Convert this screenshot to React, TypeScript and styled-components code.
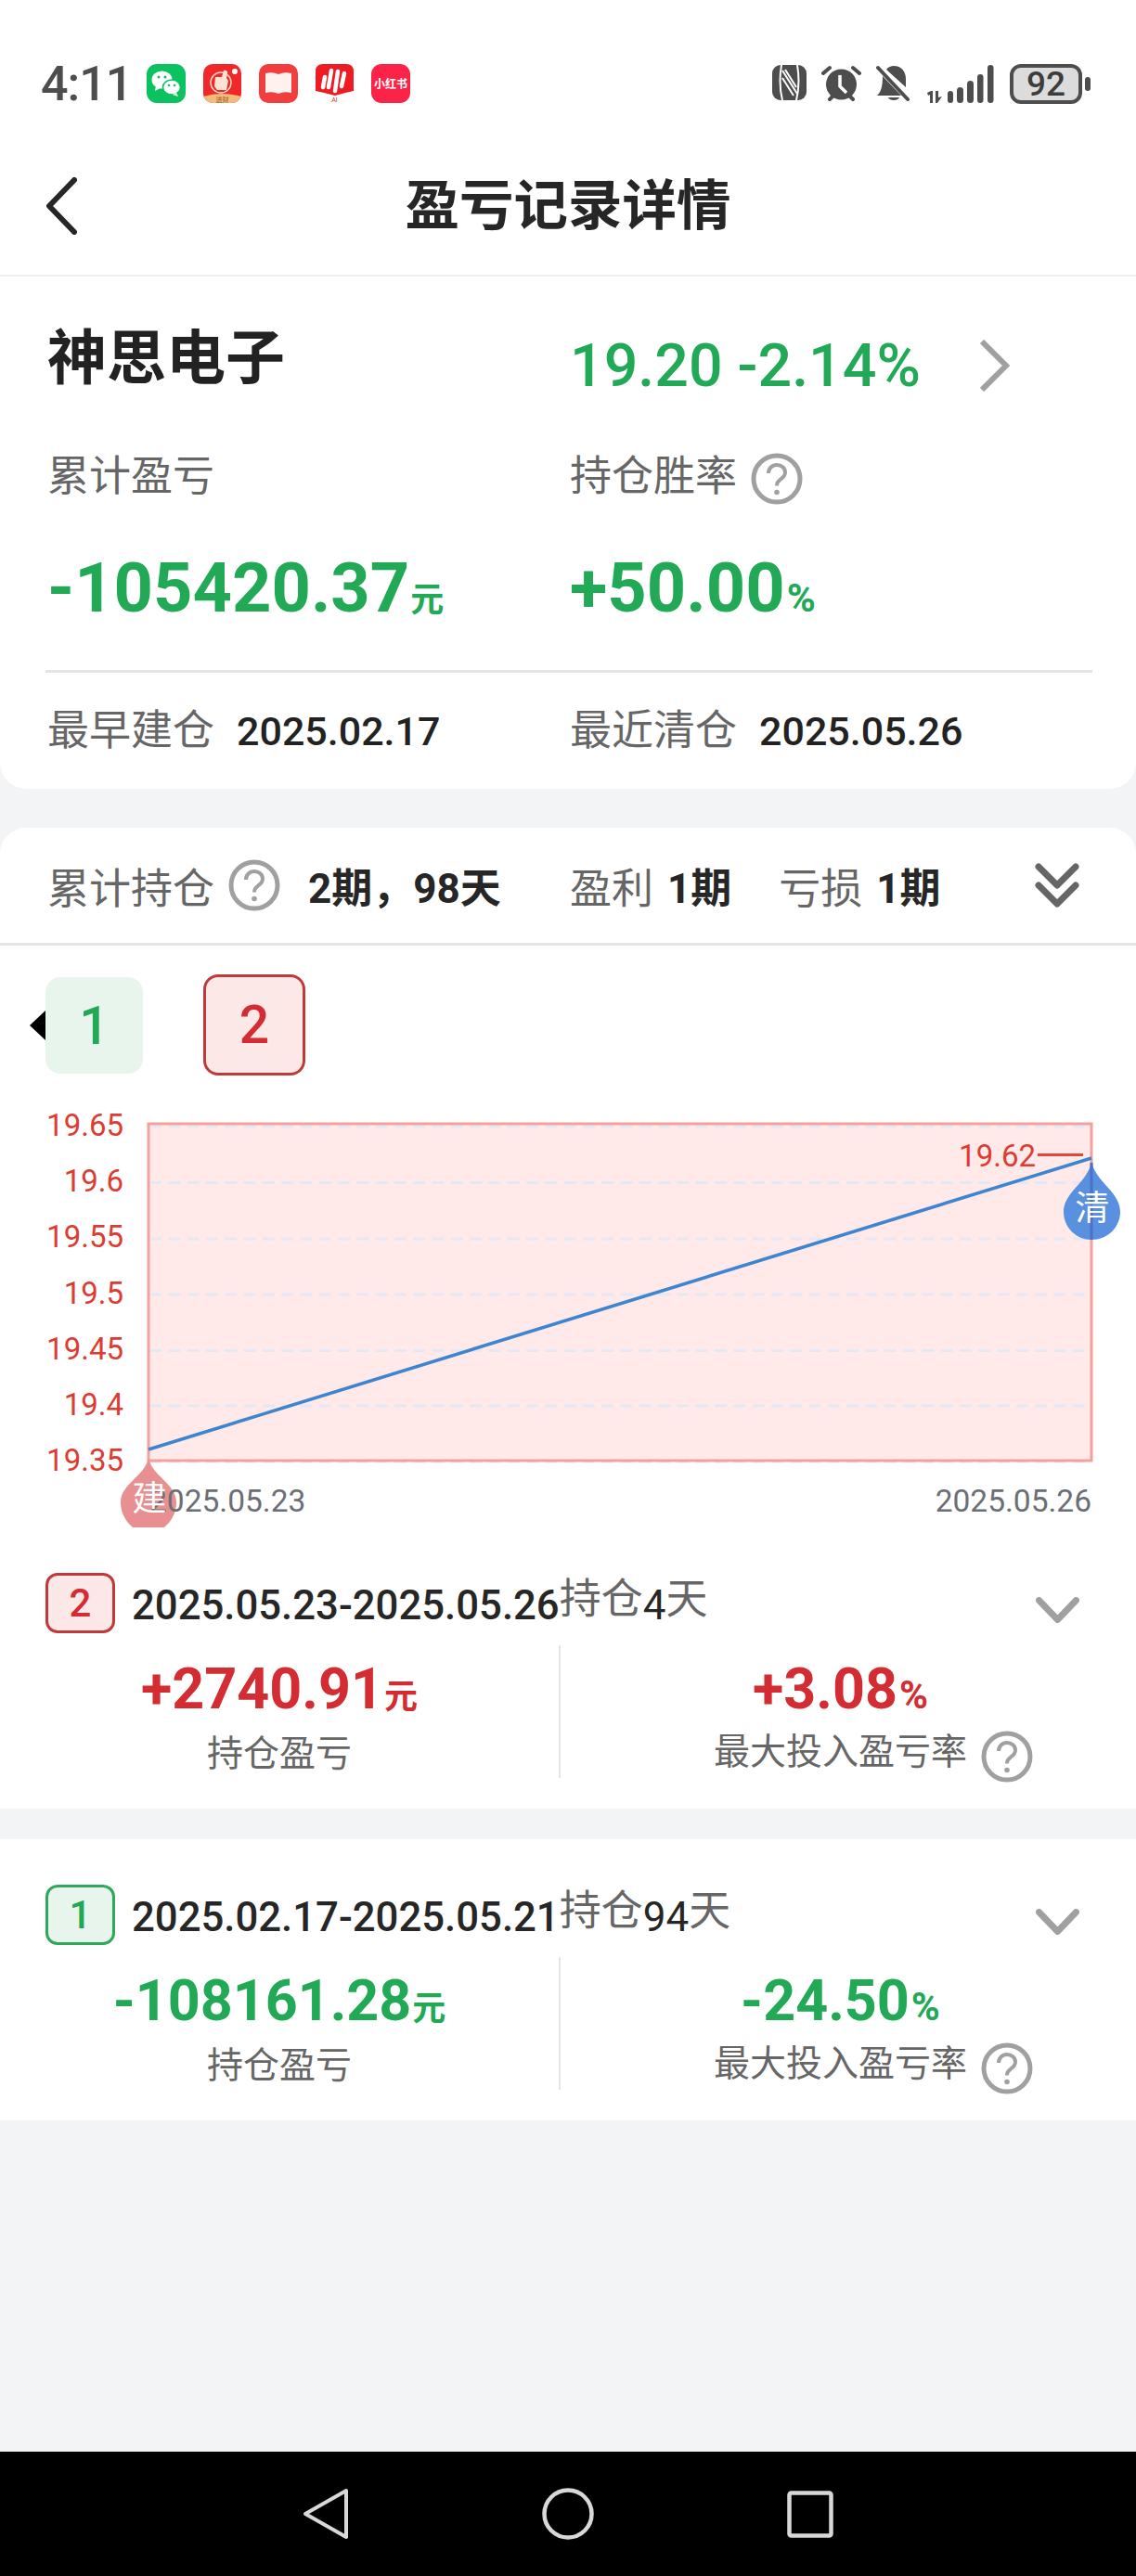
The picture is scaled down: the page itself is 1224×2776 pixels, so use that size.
import React from 'react'
import styled, { createGlobalStyle } from 'styled-components'

const GREEN = '#21a956'
const RED = '#d32c33'

const GlobalStyle = createGlobalStyle`
  html, body {
    margin: 0;
    padding: 0;
    background: #f3f4f6;
    font-family: Roboto, "Noto Sans CJK SC", sans-serif;
  }
`

const Page = styled.div`
  width: 1224px;
  height: 2776px;
  display: flex;
  flex-direction: column;
  overflow: hidden;
  background: #f3f4f6;
`

const StatusBar = styled.div`
  height: 140px;
  box-sizing: border-box;
  padding: 69px 58px 0 44px;
  display: flex;
  align-items: flex-start;
  background: #fff;
`

const Clock = styled.div`
  width: 114px;
  height: 44px;
  line-height: 44px;
  font-size: 52px;
  font-weight: 500;
  letter-spacing: -1px;
  color: #4d4d4d;
`

const AppIcons = styled.div`
  display: flex;
  gap: 19px;
`

const SystemIcons = styled.div`
  margin-left: auto;
  display: flex;
  align-items: flex-start;
  padding-top: 1px;
`

const Battery = styled.div`
  position: relative;
  width: 78px;
  height: 43px;
  margin-left: 16px;
  margin-top: -1px;
  box-sizing: border-box;
  border: 4px solid #4d4d4d;
  border-radius: 12px;
  background: #dcdcdc;
  text-align: center;
  line-height: 36px;
  font-size: 37px;
  font-weight: 500;
  color: #3d3d3d;

  &::after {
    content: '';
    position: absolute;
    right: -13px;
    top: 10px;
    width: 6px;
    height: 15px;
    border-radius: 3px;
    background: #4d4d4d;
  }
`

const Nav = styled.div`
  height: 158px;
  box-sizing: border-box;
  padding-top: 8px;
  padding-left: 50px;
  display: grid;
  grid-template-columns: 1fr auto 1fr;
  align-items: center;
  background: #fff;
  border-bottom: 2px solid #eceef0;
`

const Title = styled.div`
  margin-left: -50px;
  font-size: 58.500px;
  font-weight: 700;
  color: #262626;
  line-height: 70px;
`

const SummaryCard = styled.section`
  height: 552px;
  box-sizing: border-box;
  padding: 53px 47px 0 51px;
  background: #fff;
  border-radius: 0 0 28px 28px;
`

const TwoCols = styled.div`
  display: grid;
  grid-template-columns: 563px 1fr;
`

const StockName = styled.div`
  font-size: 64px;
  font-weight: 700;
  line-height: 72px;
  color: #222;
`

const PriceRow = styled.div`
  display: flex;
  align-items: center;
  height: 72px;
  margin-top: 7px;
  font-size: 64.500px;
  font-weight: 500;
  color: ${GREEN};
  gap: 64px;
`

const GrayLabel = styled.div`
  display: flex;
  align-items: center;
  gap: 15px;
  font-size: 45px;
  line-height: 60px;
  color: #666;

  svg {
    margin-top: 4px;
  }
`

const LabelRow = styled(TwoCols)`
  margin-top: 54px;
`

const BigValueRow = styled(TwoCols)`
  margin-top: 45px;
`

const BigValue = styled.div`
  font-size: 74px;
  font-weight: 700;
  line-height: 90px;
  color: ${GREEN};
  white-space: nowrap;
`

const Unit = styled.span<{ $percent?: boolean }>`
  margin-left: ${(p) => (p.$percent ? 2 : 1)}px;
  font-size: ${(p) => (p.$percent ? 42 : 36)}px;
  font-weight: 700;
`

const Divider = styled.div`
  height: 3px;
  margin-top: 30px;
  margin-left: -2px;
  background: #e5e5e5;
`

const DatesRow = styled(TwoCols)`
  margin-top: 33px;
`

const DateItem = styled.div`
  display: flex;
  align-items: center;
  gap: 24px;
  font-size: 45px;
  line-height: 60px;
  color: #666;
`

const DateValue = styled.span`
  font-size: 43px;
  font-weight: 500;
  color: #222;
`

const PeriodsCard = styled.section`
  margin-top: 42px;
  background: #fff;
  border-radius: 28px 28px 0 0;
`

const TotalsRow = styled.div`
  height: 127px;
  box-sizing: border-box;
  padding: 0 61px 0 51px;
  display: grid;
  grid-template-columns: 563px 1fr auto;
  align-items: center;
  border-bottom: 3px solid #e5e5e5;
`

const TotalsGroup = styled.div`
  display: flex;
  align-items: center;
`

const TotalsLabel = styled.span<{ $gap?: number }>`
  margin-left: ${(p) => p.$gap ?? 0}px;
  font-size: 45px;
  color: #666;
`

const TotalsValue = styled.span<{ $gap: number }>`
  margin-left: ${(p) => p.$gap}px;
  font-size: 44px;
  font-weight: 700;
  color: #262626;
`

const HelpSlot = styled.span`
  display: flex;
  margin-left: 15px;
`

const TabsRow = styled.div`
  height: 160px;
  box-sizing: border-box;
  padding: 31px 0 0 49px;
  display: flex;
  align-items: flex-start;
  gap: 65px;
`

const PeriodTab = styled.div<{ $tone: 'green' | 'red' }>`
  position: relative;
  display: flex;
  align-items: center;
  justify-content: center;
  box-sizing: border-box;
  font-size: 57px;
  font-weight: 500;
  ${(p) =>
    p.$tone === 'green'
      ? `
    width: 105px;
    height: 104px;
    margin-top: 3px;
    border-radius: 16px;
    background: #e8f5ec;
    color: ${GREEN};
    &::before {
      content: '';
      position: absolute;
      left: -17px;
      top: 36px;
      border-style: solid;
      border-width: 16px 17px 16px 0;
      border-color: transparent #000 transparent transparent;
    }`
      : `
    width: 110px;
    height: 109px;
    border-radius: 16px;
    border: 3px solid #bf3a3a;
    background: #fde8e8;
    color: ${RED};`}
`

const ChartSvg = styled.svg`
  display: block;
  width: 1224px;
  height: 480px;
  font-family: Roboto, "Noto Sans CJK SC", sans-serif;
`

const Record = styled.div<{ $top: number; $height: number; $gapTop?: boolean }>`
  height: ${(p) => p.$height}px;
  box-sizing: border-box;
  padding: ${(p) => p.$top}px 17px 0 0;
  background: #fff;
  margin-top: ${(p) => (p.$gapTop ? 33 : 0)}px;
`

const RecordHead = styled.div`
  height: 65px;
  display: flex;
  align-items: center;
  padding: 0 44px 0 49px;
`

const PeriodBadge = styled.div<{ $tone: 'green' | 'red' }>`
  width: 75px;
  height: 65px;
  box-sizing: border-box;
  display: flex;
  align-items: center;
  justify-content: center;
  border-radius: 13px;
  font-size: 42px;
  font-weight: 500;
  border: 3px solid ${(p) => (p.$tone === 'green' ? '#2fa85c' : '#bf3a3a')};
  background: ${(p) => (p.$tone === 'green' ? '#e8f5ec' : '#fde8e8')};
  color: ${(p) => (p.$tone === 'green' ? GREEN : RED)};
`

const RecordRange = styled.div`
  margin-left: 18px;
  margin-top: -2px;
  font-size: 43.700px;
  font-weight: 500;
  color: #262626;
  white-space: nowrap;
  line-height: 60px;
`

const HoldText = styled.span`
  font-size: 44px;
  font-weight: 400;
`

const HoldWord = styled.span`
  font-size: 45px;
  color: #666;
  vertical-align: 6px;
`

const RecordChevron = styled.div`
  margin-left: auto;
  display: flex;
  margin-top: 14px;
`

const Metrics = styled.div`
  margin-top: 13px;
  height: 143px;
  display: grid;
  grid-template-columns: 602px 1fr;
`

const Metric = styled.div<{ $divided?: boolean }>`
  padding-top: 7px;
  display: flex;
  flex-direction: column;
  align-items: center;
  ${(p) => (p.$divided ? 'border-left: 2px solid #e5e5e5;' : '')}
`

const MetricValue = styled.div<{ $tone: 'green' | 'red' }>`
  font-size: 61px;
  font-weight: 700;
  line-height: 80px;
  white-space: nowrap;
  color: ${(p) => (p.$tone === 'green' ? GREEN : RED)};
`

const MetricLabel = styled.div`
  position: relative;
  margin-top: -4px;
  font-size: 39px;
  line-height: 50px;
  color: #666;
  white-space: nowrap;
`

const MetricHelp = styled.span`
  position: absolute;
  left: calc(100% + 15px);
  top: 2px;
  display: flex;
`

const Spacer = styled.div`
  flex: 1;
`

const BottomBar = styled.div`
  height: 134px;
  padding-left: 326px;
  display: flex;
  align-items: center;
  gap: 208px;
  background: #000;
`

function HelpIcon() {
  return (
    <svg width="56" height="56" viewBox="0 0 56 56" fill="none" stroke="#a0a0a0">
      <circle cx="28" cy="28" r="25" strokeWidth="5" />
      <path d="M19 22c0-5.500 4-9 9-9s9 3.500 9 8c0 3.400-2 5.400-4.800 7.400-2.500 1.800-4.200 3.400-4.200 7" strokeWidth="4" />
      <circle cx="28" cy="42.500" r="2.800" fill="#a0a0a0" stroke="none" />
    </svg>
  )
}

function WechatIcon() {
  return (
    <svg width="42" height="42" viewBox="0 0 42 42">
      <rect width="42" height="42" rx="11" fill="#0ac25f" />
      <ellipse cx="16.500" cy="17" rx="11" ry="9.500" fill="#fff" />
      <path d="M10 23l-1 6 6-3z" fill="#fff" />
      <ellipse cx="27" cy="25" rx="9.500" ry="8" fill="#fff" stroke="#0ac25f" strokeWidth="1.500" />
      <path d="M32 31l2 4-6-2z" fill="#fff" />
      <circle cx="13" cy="14" r="1.500" fill="#0ac25f" />
      <circle cx="20" cy="14" r="1.500" fill="#0ac25f" />
      <circle cx="24" cy="23" r="1.300" fill="#0ac25f" />
      <circle cx="30" cy="23" r="1.300" fill="#0ac25f" />
    </svg>
  )
}

function FortuneIcon() {
  return (
    <svg width="41" height="42" viewBox="0 0 41 42">
      <defs>
        <clipPath id="fortune-clip">
          <rect width="41" height="42" rx="10" />
        </clipPath>
      </defs>
      <g clipPath="url(#fortune-clip)">
        <rect width="41" height="42" fill="#f0282a" />
        <path d="M0 42V35q20-6 41 0v7z" fill="#f2bd7c" />
        <circle cx="19" cy="20" r="11" fill="none" stroke="#ffd9c8" strokeWidth="1.500" />
        <path d="M13 14h7l2-7c3-1 5 1 4 4l-1 4 2 3-2 10H15l-3-4z" fill="#fde3d4" />
        <circle cx="34" cy="8" r="3" fill="#fff" />
        <text x="20.500" y="40.500" fontSize="7" textAnchor="middle" fill="#9a5a20">进财</text>
      </g>
    </svg>
  )
}

function BookIcon() {
  return (
    <svg width="42" height="42" viewBox="0 0 42 42">
      <rect width="42" height="42" rx="10" fill="#f23d3f" />
      <path d="M7 10q8-2 14 1 6-3 14-1v21q-8-2-14 1-6-3-14-1z" fill="#fff1ee" />
    </svg>
  )
}

function BrokerIcon() {
  return (
    <svg width="41" height="42" viewBox="0 0 41 42">
      <path d="M0 8q0-8 8-8h25q8 0 8 8v21q-10 2-20 5-11-3-21-5z" fill="#ee1c22" />
      <path d="M8 25l2-11M14 25l3-18M21 29l3-21M28 24l3-14" stroke="#fff" strokeWidth="4.500" strokeLinecap="round" />
      <text x="20.500" y="41" fontSize="7" textAnchor="middle" fill="#c53030">AI</text>
    </svg>
  )
}

function RedNoteIcon() {
  return (
    <svg width="42" height="42" viewBox="0 0 42 42">
      <rect width="42" height="42" rx="11" fill="#fb2347" />
      <text x="21" y="25.500" fontSize="12" fontWeight="700" textAnchor="middle" fill="#fff">小红书</text>
    </svg>
  )
}

function NfcIcon() {
  return (
    <svg width="37" height="38" viewBox="0 0 37 38">
      <rect width="37" height="38" rx="9" fill="#4d4d4d" />
      <path d="M10 0c-2 12-2 26 1 38M27 0c2 12 2 26-1 38" stroke="#fff" strokeWidth="2" fill="none" />
      <path d="M11 6l16 25M11 14l12 19M14 5l12 19" stroke="#fff" strokeWidth="2" fill="none" />
    </svg>
  )
}

function AlarmIcon() {
  return (
    <svg width="43" height="40" viewBox="0 0 43 40" style={{ marginLeft: 16 }}>
      <circle cx="21.500" cy="21" r="16.500" fill="#4d4d4d" />
      <path d="M2 9l7-6M41 9l-7-6M9 37l3-3M34 37l-3-3" stroke="#4d4d4d" strokeWidth="4" strokeLinecap="round" />
      <path d="M20 11v12l7 7" stroke="#fff" strokeWidth="3.500" fill="none" />
    </svg>
  )
}

function BellOffIcon() {
  return (
    <svg width="37" height="40" viewBox="0 0 37 40" style={{ marginLeft: 16 }}>
      <path d="M19 1c8 0 13 6 13 14v9L11 5c2-3 5-4 8-4zM7 12l20 21H1c4-4 6-9 6-21z" fill="#4d4d4d" />
      <path d="M13 35h12c-1 4-11 4-12 0z" fill="#4d4d4d" />
      <path d="M2 3l32 34" stroke="#4d4d4d" strokeWidth="4" strokeLinecap="round" />
    </svg>
  )
}

function SignalIcon() {
  return (
    <svg width="74" height="41" viewBox="0 0 74 41" style={{ marginLeft: 17 }} fill="#4d4d4d">
      <path d="M1 30l4-2h2v13H4V32l-2 1zM10 28h3v7l4-1-5 7h-2z" />
      <rect x="23" y="28" width="6" height="13" rx="3" />
      <rect x="33" y="24" width="7" height="17" rx="3.500" />
      <rect x="44" y="17" width="7" height="24" rx="3.500" />
      <rect x="55" y="10" width="6.500" height="31" rx="3.250" />
      <rect x="66" y="0" width="6.500" height="41" rx="3.250" />
    </svg>
  )
}

function BackIcon() {
  return (
    <svg width="34" height="62" viewBox="0 0 34 62" fill="none" stroke="#262626" strokeWidth="6" strokeLinecap="round" strokeLinejoin="round">
      <path d="M30 3L3 31l27 28" />
    </svg>
  )
}

function ForwardIcon() {
  return (
    <svg width="32" height="56" viewBox="0 0 32 56" fill="none" stroke="#a0a0a0" strokeWidth="6">
      <path d="M2 2l26 26L2 54" />
    </svg>
  )
}

function DoubleChevron() {
  return (
    <svg width="48" height="48" viewBox="0 0 48 48" fill="none" stroke="#666" strokeWidth="7" strokeLinecap="round" strokeLinejoin="round">
      <path d="M4 4l20 20L44 4M4 24l20 20 20-20" />
    </svg>
  )
}

function DownChevron() {
  return (
    <svg width="47" height="28" viewBox="0 0 47 28" fill="none" stroke="#a0a0a0" strokeWidth="7" strokeLinecap="round" strokeLinejoin="round">
      <path d="M3.500 3.500l20 21 20-21" />
    </svg>
  )
}

const gridLines = [1215, 1275.500, 1336, 1396, 1456.500, 1516, 1576]
const priceLabels = ['19.65', '19.6', '19.55', '19.5', '19.45', '19.4', '19.35']

function PriceChart() {
  return (
    <ChartSvg viewBox="0 1180 1224 480">
      <rect x="160" y="1212" width="1016" height="363" fill="#ffe9e9" />
      {gridLines.map((y) => (
        <line key={y} x1="161" x2="1174" y1={y} y2={y} stroke="#e5e7f5" strokeWidth="3" strokeDasharray="13 7.300" />
      ))}
      <rect x="160" y="1212" width="1016" height="363" fill="none" stroke="#f2a19c" strokeWidth="3" />
      {priceLabels.map((label, index) => (
        <text key={label} x="133" y={1225 + 60.200 * index} fontSize="33" textAnchor="end" fill="#dc3c32">
          {label}
        </text>
      ))}
      <line x1="160" y1="1563" x2="1176" y2="1249" stroke="#3d85d0" strokeWidth="3.500" />
      <path
        d="M160 1572C164 1592 190 1600 190 1620C190 1632 184 1641 177 1647L143 1647C136 1641 130 1632 130 1620C130 1600 156 1592 160 1572Z"
        fill="#e88f91"
      />
      <path
        d="M1176 1252C1180 1275 1207 1285 1207 1307C1207 1324 1193 1337 1176 1337C1160 1337 1146 1324 1146 1307C1146 1285 1173 1275 1176 1252Z"
        fill="#5a90e0"
      />
      <line x1="1176" y1="1254" x2="1176" y2="1337" stroke="#4a72c8" strokeWidth="3" />
      <text x="161" y="1630" fontSize="33.500" fill="#6b6e76">2025.05.23</text>
      <text x="1176" y="1630" fontSize="33.500" textAnchor="end" fill="#6b6e76">2025.05.26</text>
      <text x="161" y="1629" fontSize="37" textAnchor="middle" fill="#fff">建</text>
      <text x="1177" y="1316" fontSize="37" textAnchor="middle" fill="#fff">清</text>
      <text x="1116" y="1258" fontSize="33" textAnchor="end" fill="#dc3c32">19.62</text>
      <line x1="1118" x2="1167" y1="1245.500" y2="1245.500" stroke="#e5443a" strokeWidth="3" />
    </ChartSvg>
  )
}

type PeriodRecord = {
  index: number
  tone: 'green' | 'red'
  range: string
  days: number
  profit: string
  rate: string
}

const records: PeriodRecord[] = [
  { index: 2, tone: 'red', range: '2025.05.23-2025.05.26', days: 4, profit: '+2740.91', rate: '+3.08' },
  { index: 1, tone: 'green', range: '2025.02.17-2025.05.21', days: 94, profit: '-108161.28', rate: '-24.50' },
]

export default function App() {
  return (
    <Page>
      <GlobalStyle />
      <StatusBar>
        <Clock>4:11</Clock>
        <AppIcons>
          <WechatIcon />
          <FortuneIcon />
          <BookIcon />
          <BrokerIcon />
          <RedNoteIcon />
        </AppIcons>
        <SystemIcons>
          <NfcIcon />
          <AlarmIcon />
          <BellOffIcon />
          <SignalIcon />
          <Battery>92</Battery>
        </SystemIcons>
      </StatusBar>

      <Nav>
        <BackIcon />
        <Title>盈亏记录详情</Title>
      </Nav>

      <SummaryCard>
        <TwoCols>
          <StockName>神思电子</StockName>
          <PriceRow>
            19.20 -2.14%
            <ForwardIcon />
          </PriceRow>
        </TwoCols>
        <LabelRow>
          <GrayLabel>累计盈亏</GrayLabel>
          <GrayLabel>
            持仓胜率
            <HelpIcon />
          </GrayLabel>
        </LabelRow>
        <BigValueRow>
          <BigValue>
            -105420.37<Unit>元</Unit>
          </BigValue>
          <BigValue>
            +50.00<Unit $percent>%</Unit>
          </BigValue>
        </BigValueRow>
        <Divider />
        <DatesRow>
          <DateItem>
            最早建仓<DateValue>2025.02.17</DateValue>
          </DateItem>
          <DateItem>
            最近清仓<DateValue>2025.05.26</DateValue>
          </DateItem>
        </DatesRow>
      </SummaryCard>

      <PeriodsCard>
        <TotalsRow>
          <TotalsGroup>
            <TotalsLabel>累计持仓</TotalsLabel>
            <HelpSlot>
              <HelpIcon />
            </HelpSlot>
            <TotalsValue $gap={30}>2期，98天</TotalsValue>
          </TotalsGroup>
          <TotalsGroup>
            <TotalsLabel>盈利</TotalsLabel>
            <TotalsValue $gap={15}>1期</TotalsValue>
            <TotalsLabel $gap={51}>亏损</TotalsLabel>
            <TotalsValue $gap={15}>1期</TotalsValue>
          </TotalsGroup>
          <DoubleChevron />
        </TotalsRow>
        <TabsRow>
          <PeriodTab $tone="green">1</PeriodTab>
          <PeriodTab $tone="red">2</PeriodTab>
        </TabsRow>
        <PriceChart />
      </PeriodsCard>

      {records.map((record, i) => (
        <Record key={record.index} $top={i === 0 ? 36 : 49} $height={i === 0 ? 290 : 303} $gapTop={i > 0}>
          <RecordHead>
            <PeriodBadge $tone={record.tone}>{record.index}</PeriodBadge>
            <RecordRange>
              {record.range}
              <HoldText>
                <HoldWord>持仓</HoldWord>
                {record.days}
                <HoldWord>天</HoldWord>
              </HoldText>
            </RecordRange>
            <RecordChevron>
              <DownChevron />
            </RecordChevron>
          </RecordHead>
          <Metrics>
            <Metric>
              <MetricValue $tone={record.tone}>
                {record.profit}
                <Unit>元</Unit>
              </MetricValue>
              <MetricLabel>持仓盈亏</MetricLabel>
            </Metric>
            <Metric $divided>
              <MetricValue $tone={record.tone}>
                {record.rate}
                <Unit $percent>%</Unit>
              </MetricValue>
              <MetricLabel>
                最大投入盈亏率
                <MetricHelp>
                  <HelpIcon />
                </MetricHelp>
              </MetricLabel>
            </Metric>
          </Metrics>
        </Record>
      ))}

      <Spacer />

      <BottomBar>
        <svg width="50" height="56" viewBox="0 0 50 56" fill="none" stroke="#d8d8d8" strokeWidth="4" strokeLinejoin="round">
          <path d="M47 3L3 28l44 25z" />
        </svg>
        <svg width="56" height="56" viewBox="0 0 56 56" fill="none" stroke="#d8d8d8" strokeWidth="4.500">
          <circle cx="28" cy="28" r="25.500" />
        </svg>
        <svg width="50" height="51" viewBox="0 0 50 51" fill="none" stroke="#d8d8d8" strokeWidth="4.500">
          <rect x="2.500" y="2.500" width="45" height="46" rx="2" />
        </svg>
      </BottomBar>
    </Page>
  )
}
